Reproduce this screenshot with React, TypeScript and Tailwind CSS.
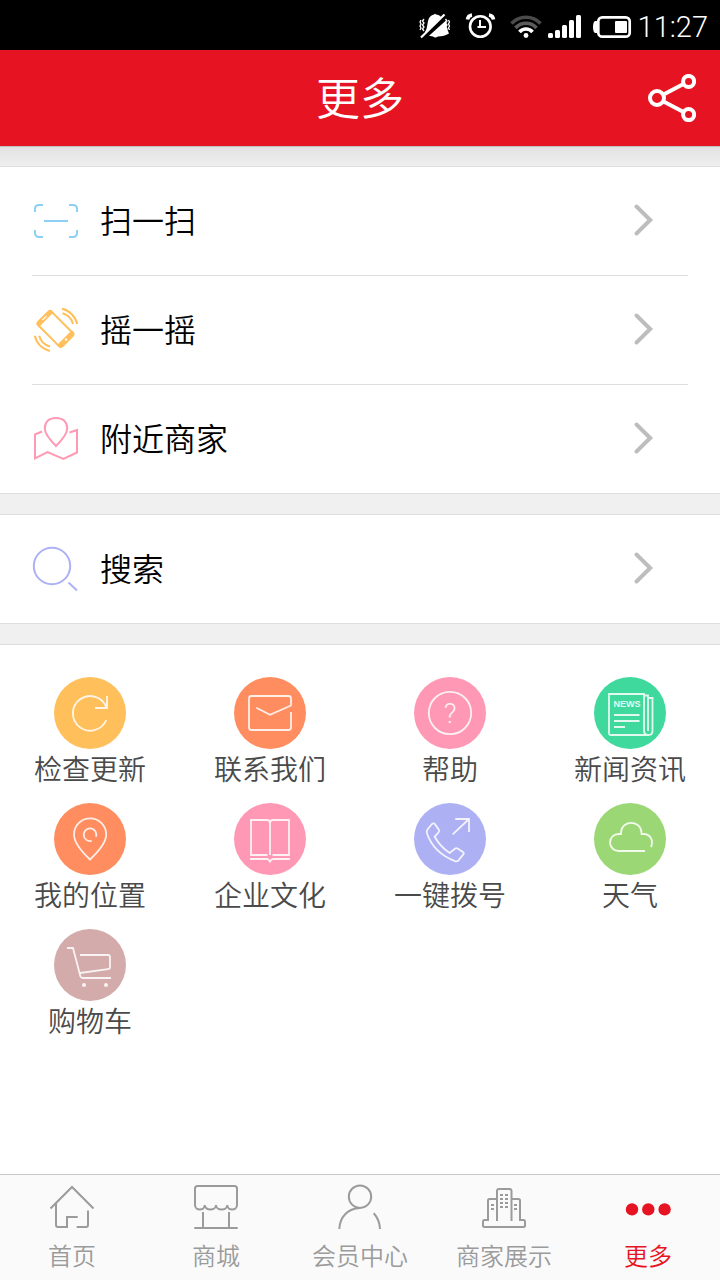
import type { ReactNode } from "react";

type Entry = { label: string; icon: ReactNode };
type Shortcut = Entry & { color: string };

function StatusBar() {
  return (
    <div className="flex h-[50px] items-center justify-end bg-black pr-3 text-white">
      <svg width="42" height="50" viewBox="416 0 42 50" fill="currentColor" aria-hidden="true">
        <path d="M425 32c2-3 2-6 3-11 1-4 3-6 6-6.500q1-1.500 2 0c2 .2 4 1 5 2.500L425 34zM446 20.500c.2 5 .6 8 2 10.500l1 2.500c-3 2-7 2.800-11 3q-3 2-5 0l-4-.7z" />
        <path d="M421 37.500 444.500 14.500" stroke="currentColor" strokeWidth="2.200" />
        <path d="M424 19l-1.500 2 1.500 2-1.500 2 1.500 2-1.500 2 1.500 2M421 20l-1 2 1 2-1 2 1 2-1 2M445.500 19l1.500 2-1.500 2 1.500 2-1.500 2 1.500 2-1.500 2M448.500 20l1 2-1 2 1 2-1 2 1 2" fill="none" stroke="currentColor" strokeWidth="1.300" />
      </svg>
      <svg width="46" height="50" viewBox="458 0 46 50" fill="none" stroke="currentColor" aria-hidden="true">
        <circle cx="480.300" cy="26.500" r="10.300" strokeWidth="2.600" />
        <path d="M480 20v7h6M477.500 27h3" strokeWidth="2" />
        <path d="M467.500 19.500q.5-4 4.500-4.500M493.500 19.500q-.5-4-4.500-4.500" strokeWidth="3.600" />
      </svg>
      <svg width="42" height="50" viewBox="504 0 42 50" fill="none" stroke="currentColor" strokeWidth="3.600" aria-hidden="true">
        <path d="M511.500 23.500a20 20 0 0 1 29 0" stroke="#4b4b4b" />
        <path d="M515.500 28a14 14 0 0 1 21 0" stroke="#5c5c5c" />
        <path d="M519.500 32a8.500 8.500 0 0 1 13 0" />
        <circle cx="526" cy="35.500" r="2.400" fill="currentColor" stroke="none" />
      </svg>
      <svg width="42" height="50" viewBox="546 0 42 50" fill="currentColor" aria-hidden="true">
        <rect x="548" y="33" width="5" height="5" rx="1.500" />
        <rect x="555" y="30" width="5" height="8" rx="1.500" />
        <rect x="562" y="25" width="5" height="13" rx="1.500" />
        <rect x="569" y="20" width="5" height="18" rx="1.500" />
        <rect x="576" y="15" width="5" height="23" rx="1.500" />
      </svg>
      <svg width="50" height="50" viewBox="588 0 50 50" fill="currentColor" aria-hidden="true">
        <rect x="598.300" y="17.300" width="31.400" height="19.400" rx="4" fill="none" stroke="currentColor" strokeWidth="2.700" />
        <path d="M598 21h-3q-2 1-2 6t2 6h3z" />
        <rect x="615" y="21" width="12" height="12" rx="1" />
      </svg>
      <span className="pt-1 font-[Roboto,sans-serif] text-[29px] leading-10 font-light">11:27</span>
    </div>
  );
}

function ShareIcon() {
  return (
    <svg width="48" height="48" viewBox="0 0 48 48" fill="none" stroke="currentColor" strokeWidth="4" aria-hidden="true">
      <circle cx="9" cy="24" r="7" />
      <circle cx="40.600" cy="7.400" r="5.500" />
      <circle cx="40.600" cy="40.600" r="5.500" />
      <path d="M15.500 20.500 35.500 10M15.500 27.500 35.500 38" />
    </svg>
  );
}

function RowIcon({ color, children }: { color: string; children: ReactNode }) {
  return (
    <svg width="48" height="48" viewBox="0 0 48 48" fill="none" stroke={color} strokeWidth="2" aria-hidden="true">
      {children}
    </svg>
  );
}

const tools: Entry[] = [
  {
    label: "扫一扫",
    icon: (
      <RowIcon color="#8dcff5">
        <path d="M3 15v-3q0-4 4-4h4M37 8h4q4 0 4 4v3M45 33v3q0 4-4 4h-4M11 40H7q-4 0-4-4v-3M12 24h24" />
      </RowIcon>
    ),
  },
  {
    label: "摇一摇",
    icon: (
      <RowIcon color="#ffbf5b">
        <g transform="rotate(-45 23.400 23)">
          <rect x="13.900" y="6" width="19" height="34" rx="3" />
          <path d="M14 9V8q0-2 2-2h15q2 0 2 2v1zM14 36.500h19v1.500q0 2-2 2H16q-2 0-2-2z" fill="#ffbf5b" />
          <path d="M20.500 7.500h6" stroke="#fff" strokeWidth="1.200" />
          <circle cx="23.400" cy="38" r="1.300" fill="#fff" stroke="none" />
        </g>
        <path d="M30 2.800A20 20 0 0 1 45.200 18M30.500 7.200A15 15 0 0 1 41 18M2.800 29.800A20 20 0 0 0 18 45M7.200 29.800A15 15 0 0 0 18 40.500" />
      </RowIcon>
    ),
  },
  {
    label: "附近商家",
    icon: (
      <RowIcon color="#ff9ab5">
        <path d="M24 31C18 25 12.800 19 12.800 13.500 12.800 6.500 17.500 3 24 3s11.200 3.500 11.200 10.500C35.200 19 30 25 24 31z" />
        <path d="M10 16.500 3 19.500v23.800L15.500 37l15.800 7L45 37.500V15l-7.500 2.500" />
      </RowIcon>
    ),
  },
];

const search: Entry[] = [
  {
    label: "搜索",
    icon: (
      <RowIcon color="#adb1f5">
        <circle cx="20" cy="21" r="18.200" />
        <path d="M36.500 37.500 45 45.500" />
      </RowIcon>
    ),
  },
];

const shortcuts: Shortcut[] = [
  {
    label: "检查更新",
    color: "bg-[#ffbf5b]",
    icon: <path d="M53 19v12H41M52.500 30.500A17.300 17.300 0 1 0 52.200 43" />,
  },
  {
    label: "联系我们",
    color: "bg-[#ff8d5f]",
    icon: <path d="M57 35v15.500q0 2.500-2.500 2.500h-37Q15 53 15 50.500v-29Q15 19 17.500 19h37q2.500 0 2.500 2.500v7l-21 9.200L22.300 30.700" />,
  },
  {
    label: "帮助",
    color: "bg-[#fe98b4]",
    icon: (
      <>
        <circle cx="36" cy="36" r="21.200" />
        <text x="36" y="46" textAnchor="middle" className="fill-current stroke-none font-[Roboto,sans-serif] text-[28px] font-light">?</text>
      </>
    ),
  },
  {
    label: "新闻资讯",
    color: "bg-[#3fd99d]",
    icon: (
      <>
        <path d="M50 53V17H15v39.500q0 1.500 1.500 1.500h38q4 0 4-4V21H54M50 18.500h4V54M50 53q0 5 4 5M20 38h25.500M20 44h25.500M20 50h11" />
        <text x="33" y="30" textAnchor="middle" className="fill-current stroke-none font-['Liberation_Sans',sans-serif] text-[9px] font-bold">NEWS</text>
      </>
    ),
  },
  {
    label: "我的位置",
    color: "bg-[#ff8d5f]",
    icon: <path d="M36 56.500C28 49 20 40 20 31.500a16 16 0 0 1 32.200 0C52.200 40 44 49 36 56.500zM42 33.700A6.300 6.300 0 1 0 37.700 37.800" />,
  },
  {
    label: "企业文化",
    color: "bg-[#fe98b4]",
    icon: <path d="M33.500 52H17V17h16q3 0 3 3v32M38.500 52H55V17H39q-3 0-3 3M16 56h17q1.500 0 3 2.500 1.500-2.500 3-2.500h17" />,
  },
  {
    label: "一键拨号",
    color: "bg-[#adb1f3]",
    icon: (
      <>
        <path d="M38.700 31.300 55 16M41.300 16H55v13" />
        <path d="M21 21.200 25 27q.7 1-.2 2L20.700 33.700Q26 43.500 35.700 50l5.500-4.500q1.200-.7 2.300 0l5.800 3.800q1 .8.200 1.800l-5 6.200q-1.500 1.500-3.500.8C28 53 17.500 43.500 13 30.500q-.7-2 .5-4l4-5q1.700-2 3.500-.3z" />
      </>
    ),
  },
  {
    label: "天气",
    color: "bg-[#9bd775]",
    icon: <path d="M51 48H24.500a8.500 8.500 0 0 1-8.500-8.500c0-5 4-8.500 8.500-8.500H27v-1c0-6 4.500-10.200 10.200-10.200S47.500 24 47.500 30v1H50c6 0 10 6.500 7 13" />,
  },
  {
    label: "购物车",
    color: "bg-[#d3abaa]",
    icon: (
      <>
        <path d="M13 19h6l7.300 28q.5 2 2.500 2H57M26 26h28q2 0 2 2v10q0 2-2 2.200L26 44" />
        <circle cx="30" cy="56" r="2" fill="currentColor" stroke="none" />
        <circle cx="52" cy="56" r="2" fill="currentColor" stroke="none" />
      </>
    ),
  },
];

const tabs: Entry[] = [
  {
    label: "首页",
    icon: <path d="M2.500 24.500 24 3l21.500 21.500M8 19.500V41q0 2 2 2h9V33h10.700M40 26.500V41q0 2-2 2h-9.300" />,
  },
  {
    label: "商城",
    icon: <path d="M12.700 21c0 6-9.700 6-9.700 0V4.500Q3 2 5.500 2h37Q45 2 45 4.500V21c0 6-9.700 6-9.700 0 0 6-11.300 6-11.300 0 0 6-11.300 6-11.300 0M11 28v15.500M37 28v15.500M2.300 44h43.400" />,
  },
  {
    label: "会员中心",
    icon: (
      <>
        <circle cx="24" cy="12.700" r="11.200" />
        <path d="M3.300 45C3.800 33 11.500 24.500 24 24M37.700 29.300Q43.500 35.500 44 45" />
      </>
    ),
  },
  {
    label: "商家展示",
    icon: (
      <>
        <path d="M17 37V7q0-2 2-2h10.500q2 0 2 2v30M17 15H9.500q-1.500 0-1.500 1.500V36H4.500Q3 36 3 37.500v4Q3 43 4.500 43h39q1.500 0 1.500-1.500v-4q0-1.500-1.500-1.500H40V16.500q0-1.500-1.500-1.500h-7" />
        <path d="M20 11h3M25 11h3M20 15h3M25 15h3M20 19h3M25 19h3M20 23h3M25 23h3M11 21h3M11 25h3M34 21h3M34 25h3" />
      </>
    ),
  },
  {
    label: "更多",
    icon: (
      <g fill="currentColor" stroke="none">
        <circle cx="8" cy="25.400" r="6.200" />
        <circle cx="24.300" cy="25.400" r="6.200" />
        <circle cx="40.600" cy="25.400" r="6.200" />
      </g>
    ),
  },
];

function RowList({ entries }: { entries: Entry[] }) {
  return (
    <ul className="divide-y divide-[#dedede] border-y border-[#dedede] bg-white px-8">
      {entries.map(({ label, icon }) => (
        <li key={label}>
          <a href="#" className="flex h-[108px] items-center pr-8 text-[32px] text-black">
            {icon}
            <span className="ml-5 flex-1 pb-1 leading-[44px]">{label}</span>
            <svg width="24" height="36" viewBox="0 0 24 36" fill="none" stroke="#bdbdbd" strokeWidth="4" strokeLinecap="round" aria-hidden="true">
              <path d="M4.500 3.500 18.200 17 4.500 30.500" />
            </svg>
          </a>
        </li>
      ))}
    </ul>
  );
}

export default function App() {
  return (
    <div className="flex min-h-screen flex-col bg-white font-['Noto_Sans_CJK_SC',sans-serif] font-[350]">
      <StatusBar />
      <header className="grid h-24 grid-cols-[1fr_auto_1fr] items-center bg-[#e61422] px-6 text-white">
        <h1 className="col-start-2 pb-1 text-[44px] leading-[60px] font-[350]">更多</h1>
        <button type="button" aria-label="分享" className="justify-self-end">
          <ShareIcon />
        </button>
      </header>

      <main className="flex-1">
        <div className="h-5 border-t border-[#bfbfbf] bg-linear-to-b from-[#e2e2e2] to-[#efefef]" />
        <RowList entries={tools} />
        <div className="h-5 bg-[#f0f0f0]" />
        <RowList entries={search} />
        <div className="h-5 bg-[#f0f0f0]" />
        <ul className="grid grid-cols-4 gap-y-4 border-t border-[#dedede] pt-8 pb-8">
          {shortcuts.map(({ label, color, icon }) => (
            <li key={label}>
              <a href="#" className="flex flex-col items-center text-[#4a4a4a]">
                <span className={`rounded-full text-white/85 ${color}`}>
                  <svg width="72" height="72" viewBox="0 0 72 72" fill="none" stroke="currentColor" strokeWidth="1.800" aria-hidden="true">
                    {icon}
                  </svg>
                </span>
                <span className="text-[28px] leading-[38px]">{label}</span>
              </a>
            </li>
          ))}
        </ul>
      </main>

      <nav className="grid grid-cols-5 border-t border-[#c8c8c8] bg-[#fafafa] pt-[9px] pb-[2px]">
        {tabs.map(({ label, icon }) => (
          <a
            key={label}
            href="#"
            aria-current={label === "更多" ? "page" : undefined}
            className="flex flex-col items-center text-[#9b9b9b] aria-[current=page]:text-[#e61422]"
          >
            <svg width="48" height="48" viewBox="0 0 48 48" fill="none" stroke="currentColor" strokeWidth="2" aria-hidden="true">
              {icon}
            </svg>
            <span className="text-2xl leading-[46px]">{label}</span>
          </a>
        ))}
      </nav>
    </div>
  );
}
